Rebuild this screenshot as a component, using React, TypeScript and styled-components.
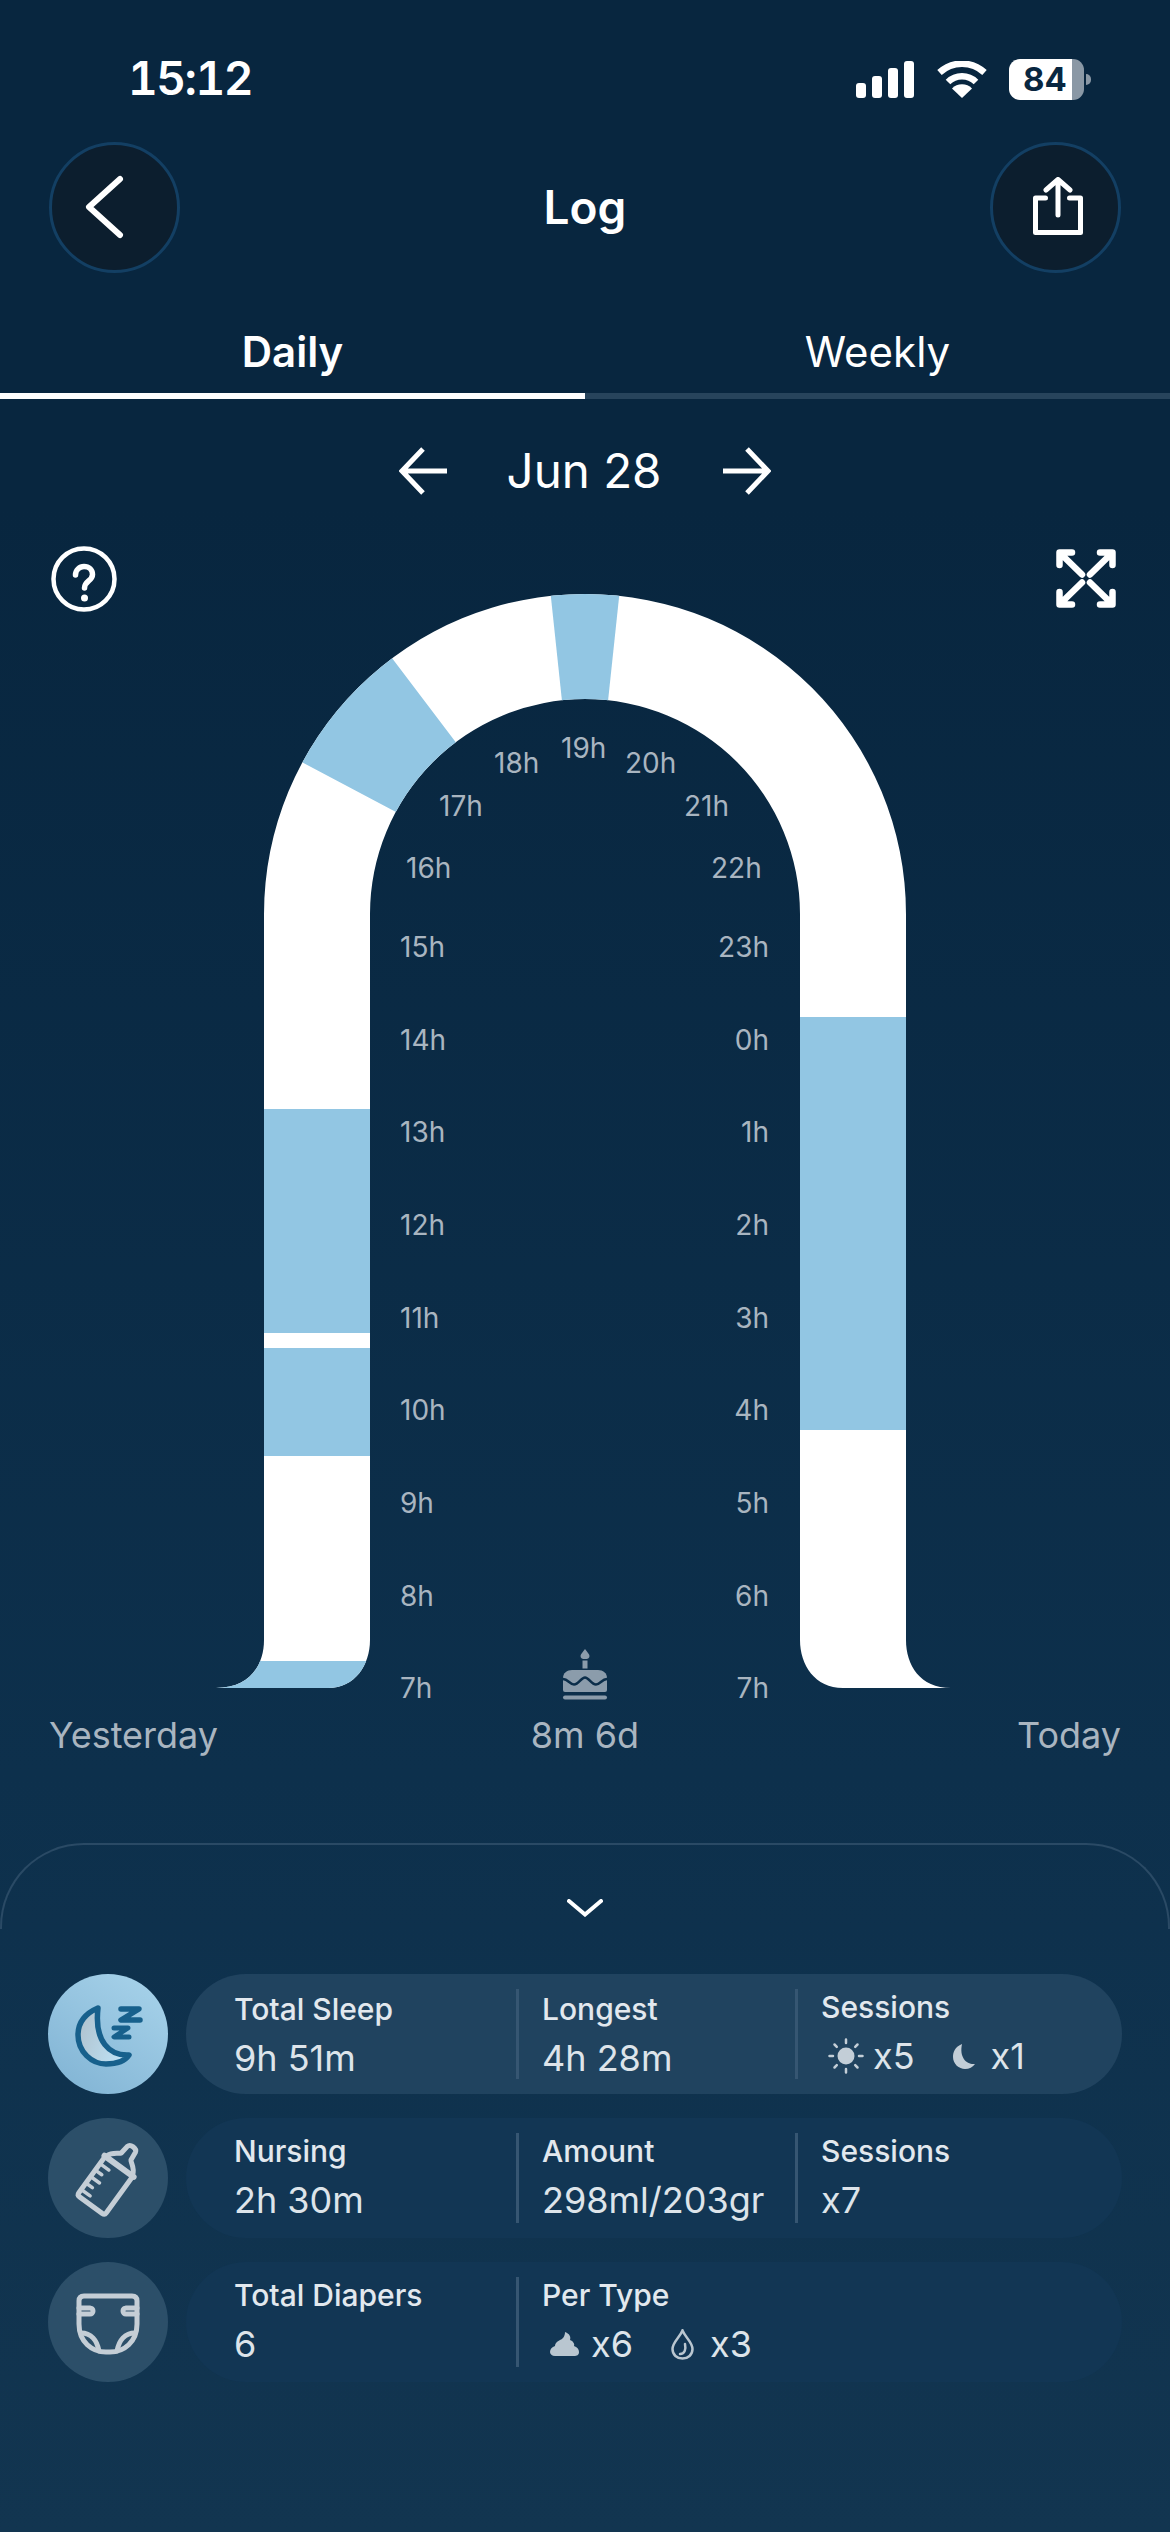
import React from 'react';
import styled, { createGlobalStyle } from 'styled-components';

const GlobalStyle = createGlobalStyle`
  html, body {
    margin: 0;
    padding: 0;
    background: #082640;
  }
  * {
    box-sizing: border-box;
  }
`;

const Page = styled.div`
  width: 1170px;
  height: 2532px;
  overflow: hidden;
  display: flex;
  flex-direction: column;
  font-family: Inter, "Liberation Sans", sans-serif;
  color: #fff;
  background: linear-gradient(180deg, #08263f 0%, #08263f 20%, #0d304c 70%, #123550 100%);
`;

const StatusBar = styled.div`
  height: 141px;
  padding: 52px 86px 0 128px;
  display: flex;
  justify-content: space-between;
  align-items: flex-start;
`;

const Clock = styled.div`
  font-size: 46px;
  line-height: 52px;
  font-weight: 600;
  letter-spacing: -1.5px;
  font-feature-settings: 'tnum';
`;

const StatusIcons = styled.div`
  display: flex;
  align-items: flex-end;
  gap: 23px;
  height: 46px;
`;

const Battery = styled.div`
  position: relative;
  width: 75px;
  height: 41px;
  margin-left: -1px;
  margin-bottom: -2px;
  border-radius: 11px;
  background: linear-gradient(90deg, #fff 84%, #8a98a5 84%);
  color: #082640;
  font-size: 33px;
  line-height: 41px;
  font-weight: 700;
  padding-left: 14px;

  &::after {
    content: '';
    position: absolute;
    right: -7px;
    top: 15px;
    width: 5px;
    height: 11px;
    border-radius: 0 5px 5px 0;
    background: #8a98a5;
  }
`;

const Nav = styled.div`
  height: 132px;
  padding: 0 49px;
  display: flex;
  align-items: center;
  justify-content: space-between;
`;

const RoundButton = styled.button`
  width: 131px;
  height: 131px;
  padding: 0;
  border-radius: 50%;
  border: 3px solid #133f63;
  background: #0c1e2e;
  display: flex;
  align-items: center;
  justify-content: center;
`;

const BackGlyph = styled.svg`
  margin-right: 15px;
`;

const ShareGlyph = styled.svg`
  margin-left: 6px;
`;

const NavTitle = styled.div`
  font-size: 46px;
  font-weight: 600;
  line-height: 56px;
`;

const Tabs = styled.div`
  height: 126px;
  display: flex;
`;

const Tab = styled.div<{ $active?: boolean }>`
  flex: 1;
  display: flex;
  justify-content: center;
  align-items: flex-end;
  padding-bottom: 16px;
  font-size: 42px;
  line-height: 50px;
  font-weight: ${p => (p.$active ? 600 : 400)};
  border-bottom: 6px solid ${p => (p.$active ? '#fff' : '#27445c')};
`;

const DateRow = styled.div`
  height: 144px;
  display: flex;
  align-items: center;
  justify-content: center;
  gap: 61px;
`;

const DateText = styled.div`
  font-size: 47.5px;
  line-height: 56px;
  width: 152px;
  display: flex;
  justify-content: center;
  white-space: nowrap;
`;

const NextGlyph = styled.svg`
  margin-left: 2px;
`;

const ChartBlock = styled.div`
  position: relative;
  height: 1170px;
`;

const ChartSvg = styled.svg`
  display: block;
`;

const HourLabel = styled.text`
  font-family: Inter, "Liberation Sans", sans-serif;
  font-size: 28px;
  fill: #a9b5c0;
`;

const HelpIcon = styled.svg`
  position: absolute;
  left: 51px;
  top: 3px;
`;

const ExpandIcon = styled.svg`
  position: absolute;
  left: 1056px;
  top: 6px;
`;

const AxisRow = styled.div`
  height: 44px;
  padding: 0 49px;
  display: grid;
  grid-template-columns: 1fr auto 1fr;
  align-items: center;
  font-size: 36px;
  line-height: 44px;
  color: #a9b5c0;
`;

const AxisEnd = styled.span`
  text-align: right;
`;

const Sheet = styled.div`
  position: relative;
  margin-top: 86px;
  flex: 1;
  padding: 56px 48px 0;
  display: flex;
  flex-direction: column;
  align-items: stretch;

  &::before {
    content: '';
    position: absolute;
    left: 0;
    right: 0;
    top: 0;
    height: 84px;
    border: 2px solid #2a4a65;
    border-bottom: none;
    border-radius: 84px 84px 0 0;
  }
`;

const SheetToggle = styled.div`
  display: flex;
  justify-content: center;
  margin-bottom: 57px;
`;

const Rows = styled.div`
  display: flex;
  flex-direction: column;
  gap: 24px;
`;

const Row = styled.div`
  display: flex;
  align-items: center;
  gap: 18px;
`;

const IconCircle = styled.div<{ $active?: boolean }>`
  width: 120px;
  height: 120px;
  flex: none;
  border-radius: 50%;
  display: flex;
  align-items: center;
  justify-content: center;
  background: ${p => (p.$active ? 'linear-gradient(35deg, #7fb2d3 0%, #a9d4eb 100%)' : '#2c4f69')};
`;

const Pill = styled.div<{ $active?: boolean }>`
  flex: 1;
  height: 120px;
  border-radius: 60px;
  padding: 15px 0 15px 48px;
  display: flex;
  background: ${p => (p.$active ? '#20435f' : '#123654')};
`;

const Cell = styled.div<{ $width?: number; $divider?: boolean; $low?: boolean }>`
  width: ${p => (p.$width ? `${p.$width}px` : 'auto')};
  flex: ${p => (p.$width ? 'none' : 1)};
  height: 90px;
  padding-left: ${p => (p.$divider ? '23px' : '0')};
  padding-top: ${p => (p.$low ? '2px' : '0')};
  border-left: ${p => (p.$divider ? '3px solid #365672' : 'none')};
`;

const CellTitle = styled.div`
  margin-top: -1px;
  font-size: 30px;
  line-height: 38px;
  font-weight: 500;
  color: #e2e8ee;
  white-space: nowrap;
`;

const CellValue = styled.div`
  margin-top: 8px;
  height: 44px;
  font-size: 36px;
  line-height: 44px;
  color: #dde4ea;
  display: flex;
  align-items: center;
  white-space: nowrap;
`;

const InlineIcon = styled.svg<{ $left?: number; $right?: number }>`
  flex: none;
  margin-left: ${p => p.$left ?? 0}px;
  margin-right: ${p => p.$right ?? 0}px;
`;

const ARCH =
  'M216 1688 C250 1688 264 1665 264 1640 L264 914 A321 320 0 0 1 906 914 L906 1640 C906 1665 920 1688 951 1688 L843 1688 C815 1688 800 1665 800 1640 L800 914 A215 215 0 0 0 370 914 L370 1640 C370 1665 355 1688 328 1688 Z';

const SLEEP_BANDS = [
  { x: 200, y: 1109, w: 200, h: 224 },
  { x: 200, y: 1348, w: 200, h: 108 },
  { x: 180, y: 1661, w: 220, h: 40 },
  { x: 780, y: 1017, w: 150, h: 413 },
];

const SLEEP_WEDGES = [
  '547,560 623,560 606,720 564,720',
  '370,629 392.5,658.7 455.4,741.7 470,761 410,819 395.5,811.7 303,762.7 260,740 300,650',
];

const HOURS: { t: string; x: number; y: number; end?: boolean }[] = [
  { t: '7h', x: 400, y: 1688 },
  { t: '8h', x: 400, y: 1596 },
  { t: '9h', x: 400, y: 1503 },
  { t: '10h', x: 400, y: 1410 },
  { t: '11h', x: 400, y: 1318 },
  { t: '12h', x: 400, y: 1225 },
  { t: '13h', x: 400, y: 1132 },
  { t: '14h', x: 400, y: 1040 },
  { t: '15h', x: 400, y: 947 },
  { t: '16h', x: 406, y: 868 },
  { t: '17h', x: 439, y: 806 },
  { t: '18h', x: 494, y: 763 },
  { t: '19h', x: 561, y: 748 },
  { t: '20h', x: 625, y: 763 },
  { t: '21h', x: 684, y: 806 },
  { t: '22h', x: 711, y: 868 },
  { t: '23h', x: 769, y: 947, end: true },
  { t: '0h', x: 769, y: 1040, end: true },
  { t: '1h', x: 769, y: 1132, end: true },
  { t: '2h', x: 769, y: 1225, end: true },
  { t: '3h', x: 769, y: 1318, end: true },
  { t: '4h', x: 769, y: 1410, end: true },
  { t: '5h', x: 769, y: 1503, end: true },
  { t: '6h', x: 769, y: 1596, end: true },
  { t: '7h', x: 769, y: 1688, end: true },
];

const Signal = () => (
  <svg width="58" height="37" viewBox="0 0 58 37" fill="#fff">
    <rect x="0" y="22" width="10" height="15" rx="3" />
    <rect x="16" y="15" width="10" height="22" rx="3" />
    <rect x="32" y="7" width="10" height="30" rx="3" />
    <rect x="48" y="0" width="10" height="37" rx="3" />
  </svg>
);

const Wifi = () => (
  <svg width="50" height="37" viewBox="0 0 50 37" fill="none">
    <path d="M2.5 11.5 A33 33 0 0 1 47.5 11.5" stroke="#fff" strokeWidth="6.5" />
    <path d="M11 21 A20 20 0 0 1 39 21" stroke="#fff" strokeWidth="6.5" />
    <path d="M25 37 L15 27.5 A14 14 0 0 1 35 27.5 Z" fill="#fff" />
  </svg>
);

const Cake = () => (
  <g transform="translate(563 1650)">
    <path d="M22 -1 C24 2 26.5 4 26.5 6 C26.5 8.5 24.5 9 22 9 C19.5 9 17.5 8.5 17.5 6 C17.5 4 20 2 22 -1 Z" fill="#8b9cab" />
    <rect x="19.5" y="10.5" width="5" height="8" fill="#8b9cab" />
    <path d="M0 28 C0 23 4 20 9 20 L35 20 C40 20 44 23 44 28 L44 40 Q44 42 42 42 L2 42 Q0 42 0 40 Z" fill="#8b9cab" />
    <path d="M0 29 C5 29 7 34.5 11 34.5 C16 34.5 18 27.5 22 27.5 C26 27.5 28 34.5 33 34.5 C37 34.5 39 29 44 29" fill="none" stroke="#0b2e4a" strokeWidth="2.5" />
    <rect x="0" y="45.5" width="44" height="4" rx="2" fill="#8b9cab" />
  </g>
);

const App: React.FC = () => (
  <Page>
    <GlobalStyle />
    <StatusBar>
      <Clock>15:12</Clock>
      <StatusIcons>
        <Signal />
        <Wifi />
        <Battery>84</Battery>
      </StatusIcons>
    </StatusBar>

    <Nav>
      <RoundButton>
        <BackGlyph width="50" height="70" viewBox="0 0 50 70" fill="none">
          <path d="M38 7 L7 35 L38 63" stroke="#fff" strokeWidth="6" strokeLinecap="round" strokeLinejoin="round" />
        </BackGlyph>
      </RoundButton>
      <NavTitle>Log</NavTitle>
      <RoundButton>
        <ShareGlyph width="54" height="60" viewBox="0 0 54 60" fill="none" stroke="#fff" strokeWidth="5" strokeLinecap="round" strokeLinejoin="round">
          <path d="M27 38 L27 3 M15 13 L27 2.5 L39 13" />
          <path d="M15 21 L5 21 L5 55.5 L50 55.5 L50 21 L39 21" transform="translate(-0.5 0)" />
        </ShareGlyph>
      </RoundButton>
    </Nav>

    <Tabs>
      <Tab $active>Daily</Tab>
      <Tab>Weekly</Tab>
    </Tabs>

    <DateRow>
      <svg width="48" height="48" viewBox="0 0 48 48" fill="none" stroke="#fff" strokeWidth="5">
        <path d="M48 24 L3 24 M24 2 L3 24 L24 46" />
      </svg>
      <DateText>Jun 28</DateText>
      <NextGlyph width="48" height="48" viewBox="0 0 48 48" fill="none" stroke="#fff" strokeWidth="5">
        <path d="M0 24 L45 24 M24 2 L45 24 L24 46" />
      </NextGlyph>
    </DateRow>

    <ChartBlock>
      <ChartSvg width="1170" height="1170" viewBox="0 543 1170 1170">
        <defs>
          <clipPath id="arch">
            <path d={ARCH} />
          </clipPath>
        </defs>
        <path d={ARCH} fill="#fff" />
        <g clipPath="url(#arch)" fill="#92c6e3">
          {SLEEP_BANDS.map((b, i) => (
            <rect key={i} x={b.x} y={b.y} width={b.w} height={b.h} />
          ))}
          {SLEEP_WEDGES.map((w, i) => (
            <polygon key={i} points={w} />
          ))}
        </g>
        {HOURS.map((h, i) => (
          <HourLabel key={i} x={h.x} y={h.y + 10} textAnchor={h.end ? 'end' : 'start'}>
            {h.t}
          </HourLabel>
        ))}
        <Cake />
      </ChartSvg>
      <HelpIcon width="66" height="66" viewBox="0 0 66 66" fill="none" stroke="#fff" strokeWidth="4.5">
        <circle cx="33" cy="33" r="30.5" />
        <path d="M24.5 29 C24.5 24 28.5 20.5 33 20.5 C38 20.5 41.5 24 41.5 28.5 C41.5 35 33.5 35 33.5 42" strokeWidth="5.5" strokeLinecap="round" />
        <circle cx="33.5" cy="52" r="3.5" fill="#fff" stroke="none" />
      </HelpIcon>
      <ExpandIcon width="61" height="59" viewBox="0 0 61 59" fill="none" stroke="#fff" strokeWidth="6.5" strokeLinecap="round" strokeLinejoin="round">
        <path d="M26 25.5 L5 5 M3.5 16 L3.5 3.5 L16 3.5" />
        <path d="M34 25.5 L55 5 M44 3.5 L56.5 3.5 L56.5 16" />
        <path d="M26 33.5 L5 54 M3.5 43 L3.5 55.5 L16 55.5" />
        <path d="M34 33.5 L55 54 M44 55.5 L56.5 55.5 L56.5 43" />
      </ExpandIcon>
    </ChartBlock>

    <AxisRow>
      <span>Yesterday</span>
      <span>8m 6d</span>
      <AxisEnd>Today</AxisEnd>
    </AxisRow>

    <Sheet>
      <SheetToggle>
        <svg width="36" height="18" viewBox="0 0 36 18" fill="none">
          <path d="M2 2 L18 15.5 L34 2" stroke="#fff" strokeWidth="4" strokeLinecap="round" />
        </svg>
      </SheetToggle>
      <Rows>
        <Row>
          <IconCircle $active>
            <svg width="120" height="120" viewBox="0 0 120 120" fill="none">
              <defs>
                <linearGradient id="moonFill" x1="0" y1="0" x2="1" y2="0.4">
                  <stop offset="0" stopColor="#aebfca" />
                  <stop offset="1" stopColor="#bde0f3" />
                </linearGradient>
              </defs>
              <path
                d="M50 34 C36 40 30 50 30 61 C30 78 44 90 58 90 C68 90 77 87 81 81 C62 82 46 68 50 34 Z"
                fill="url(#moonFill)"
                stroke="#17608c"
                strokeWidth="5.5"
                strokeLinejoin="round"
              />
              <path d="M73 35 L91 35 L73 46 L92 46" stroke="#17608c" strokeWidth="5.5" strokeLinecap="round" strokeLinejoin="round" />
              <path d="M66 54 L80 54 L66 63 L81 63" stroke="#17608c" strokeWidth="5" strokeLinecap="round" strokeLinejoin="round" />
            </svg>
          </IconCircle>
          <Pill $active>
            <Cell $width={282} $low>
              <CellTitle>Total Sleep</CellTitle>
              <CellValue>9h 51m</CellValue>
            </Cell>
            <Cell $width={279} $divider $low>
              <CellTitle>Longest</CellTitle>
              <CellValue>4h 28m</CellValue>
            </Cell>
            <Cell $divider>
              <CellTitle>Sessions</CellTitle>
              <CellValue>
                <InlineIcon width="36" height="36" viewBox="0 0 36 36" $left={7} $right={9} fill="none" stroke="#c3ced7" strokeWidth="2.5" strokeLinecap="round">
                  <circle cx="18" cy="18" r="8.5" fill="#c3ced7" stroke="none" />
                  <path d="M18 1.5 V5 M18 31 V34.5 M1.5 18 H5 M31 18 H34.5 M6.5 6.5 L8.8 8.8 M27.2 27.2 L29.5 29.5 M6.5 29.5 L8.8 27.2 M27.2 8.8 L29.5 6.5" />
                </InlineIcon>
                <span>x5</span>
                <InlineIcon width="22" height="25" viewBox="0 0 22 25" $left={38} $right={16}>
                  <path d="M9 0 C2 3 0 8 0 13 C0 20 6 25 12 25 C16 25 20 23 22 20 C14 21 6 14 9 0 Z" fill="#c3ced7" />
                </InlineIcon>
                <span>x1</span>
              </CellValue>
            </Cell>
          </Pill>
        </Row>

        <Row>
          <IconCircle>
            <svg width="120" height="120" viewBox="0 0 120 120" fill="none" stroke="#c5ced6" strokeWidth="5" strokeLinejoin="round" strokeLinecap="round">
              <g transform="translate(64 58) rotate(36)">
                <path d="M-17 -12 L-17 33 Q-17 36 -14 36 L14 36 Q17 36 17 33 L17 -12" />
                <path d="M-18 -12 L18 -12" strokeWidth="6" />
                <path d="M-16 -13 C-14 -20 -7 -22 -6 -24 L-5 -33 C-4 -37 4 -37 5 -33 L6 -24 C7 -22 14 -20 16 -13" />
                <path d="M-17 -3 L-6 -3 M-17 5 L-9 5 M-17 13 L-6 13 M-17 21 L-9 21 M-17 29 L-6 29" strokeWidth="3.5" />
              </g>
            </svg>
          </IconCircle>
          <Pill>
            <Cell $width={282}>
              <CellTitle>Nursing</CellTitle>
              <CellValue>2h 30m</CellValue>
            </Cell>
            <Cell $width={279} $divider>
              <CellTitle>Amount</CellTitle>
              <CellValue>298ml/203gr</CellValue>
            </Cell>
            <Cell $divider>
              <CellTitle>Sessions</CellTitle>
              <CellValue>x7</CellValue>
            </Cell>
          </Pill>
        </Row>

        <Row>
          <IconCircle>
            <svg width="120" height="120" viewBox="0 0 120 120" fill="none" stroke="#c5ced6" strokeWidth="5" strokeLinejoin="round" strokeLinecap="round">
              <path d="M36 34 L84 34 Q89 34 89 39 L89 62 C89 80 76 90 62 90 L58 90 C44 90 31 80 31 62 L31 39 Q31 34 36 34 Z" />
              <path d="M31 46 L42 46 M31 52 L42 52 M42 46 A3 3 0 0 1 42 52" />
              <path d="M89 46 L78 46 M89 52 L78 52 M78 46 A3 3 0 0 0 78 52" />
              <path d="M33 71 C43 71 49 78 51 89" />
              <path d="M87 71 C77 71 71 78 69 89" />
            </svg>
          </IconCircle>
          <Pill>
            <Cell $width={282}>
              <CellTitle>Total Diapers</CellTitle>
              <CellValue>6</CellValue>
            </Cell>
            <Cell $divider>
              <CellTitle>Per Type</CellTitle>
              <CellValue>
                <InlineIcon width="29" height="24" viewBox="0 0 29 24" $left={8} $right={12}>
                  <path d="M15 0 C20 2 21 5 20 8 C23 9 25 12 24 14 C27 15 29 17 29 20 C29 23 27 24 24 24 L5 24 C2 24 0 22 0 20 C0 17 2 15 5 14 C5 11 8 9 10 8 C13 7 15 4 15 0 Z" fill="#b9c6d0" />
                </InlineIcon>
                <span>x6</span>
                <InlineIcon width="23" height="31" viewBox="0 0 23 31" $left={38} $right={16} fill="none" stroke="#b9c6d0" strokeWidth="2.5">
                  <path d="M11.5 1.5 C9 8 1.5 13 1.5 20 C1.5 26 6 29.5 11.5 29.5 C17 29.5 21.5 26 21.5 20 C21.5 13 14 8 11.5 1.5 Z" />
                  <path d="M14 15 C15 20 14 25 9 25" strokeLinecap="round" />
                </InlineIcon>
                <span>x3</span>
              </CellValue>
            </Cell>
          </Pill>
        </Row>
      </Rows>
    </Sheet>
  </Page>
);

export default App;
